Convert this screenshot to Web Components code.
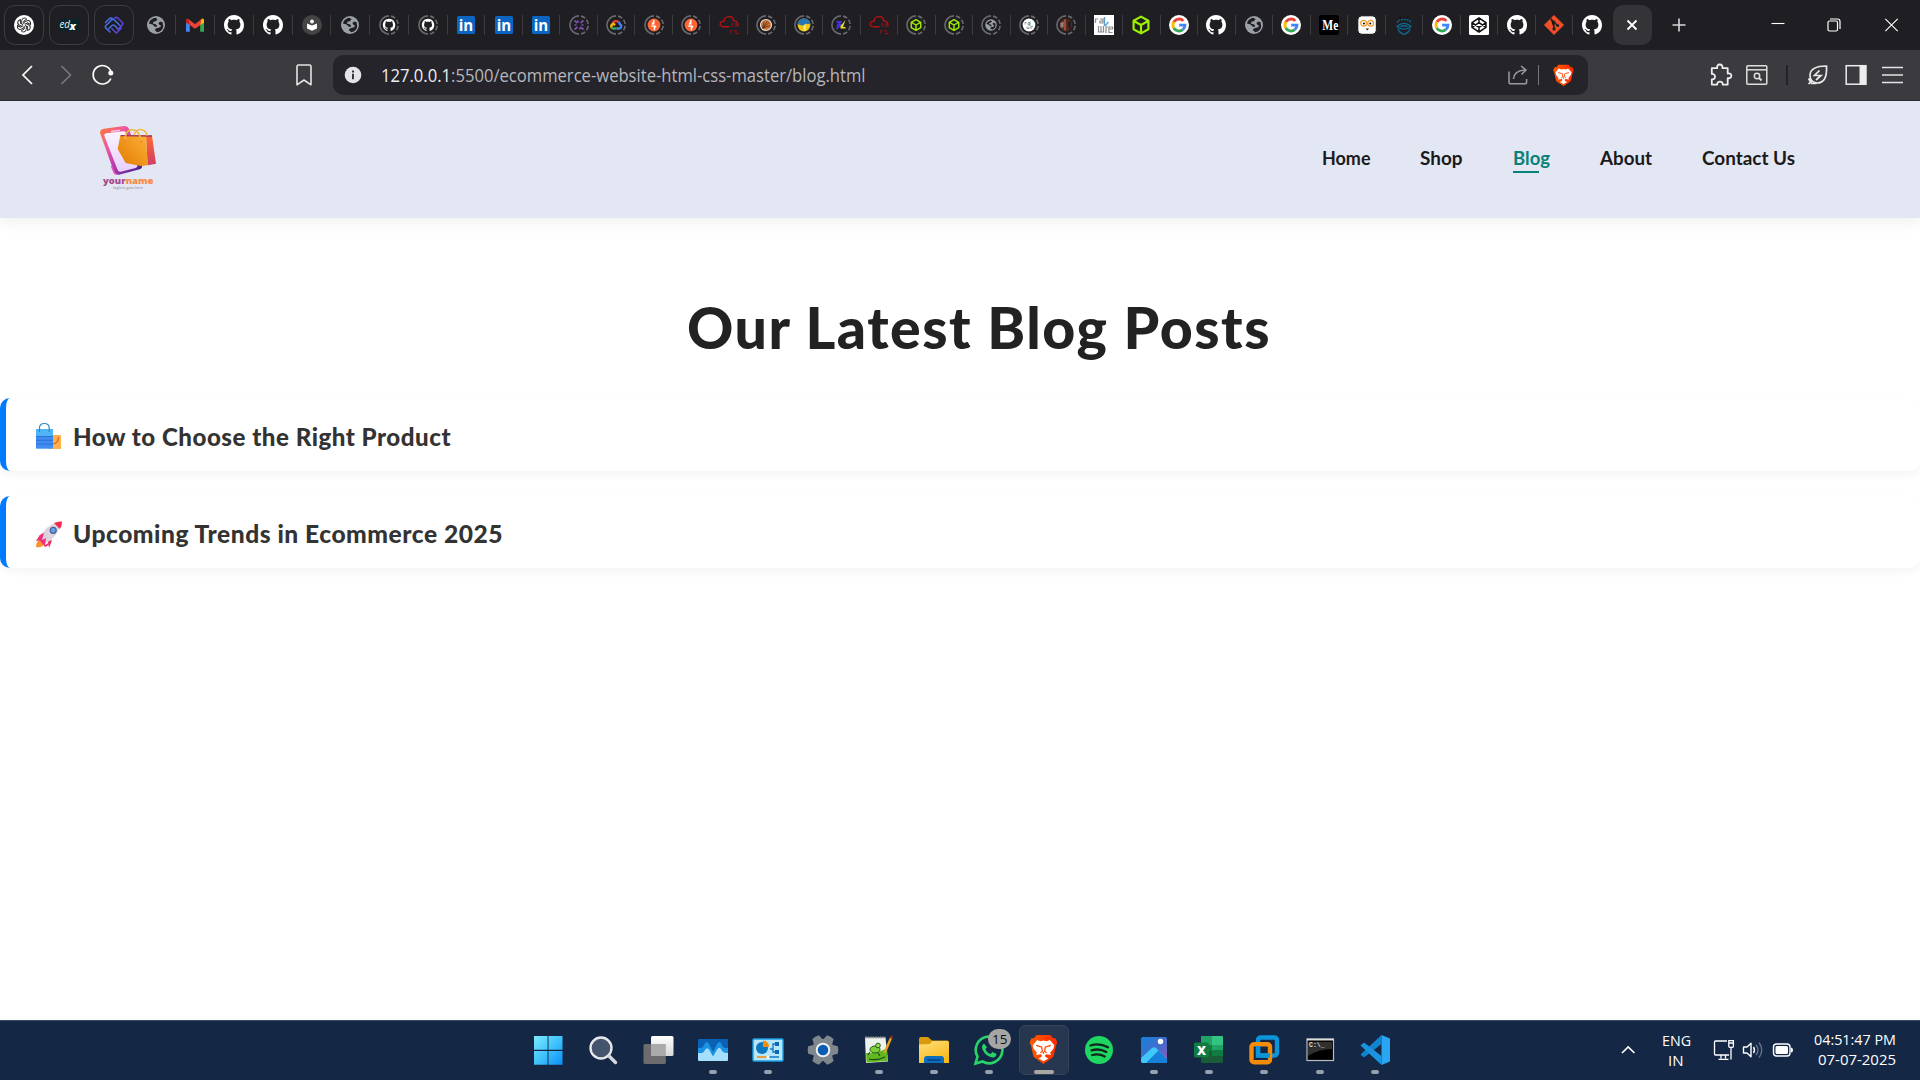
<!DOCTYPE html>
<html lang="en">
<head>
<meta charset="utf-8">
<title>Blog</title>
<style>
html,body{margin:0;height:100%;overflow:hidden;background:#fff}
</style>
</head>
<body>
<desktop-screen></desktop-screen>
<script>
const GH='<path fill="#fff" d="M8 0C3.58 0 0 3.58 0 8c0 3.54 2.29 6.53 5.47 7.59.4.07.55-.17.55-.38 0-.19-.01-.82-.01-1.49-2.01.37-2.53-.49-2.69-.94-.09-.23-.48-.94-.82-1.13-.28-.15-.68-.52-.01-.53.63-.01 1.08.58 1.23.82.72 1.21 1.87.87 2.33.66.07-.52.28-.87.51-1.07-1.78-.2-3.64-.89-3.64-3.95 0-.87.31-1.59.82-2.15-.08-.2-.36-1.02.08-2.12 0 0 .67-.21 2.2.82.64-.18 1.32-.27 2-.27s1.36.09 2 .27c1.53-1.04 2.2-.82 2.2-.82.44 1.1.16 1.92.08 2.12.51.56.82 1.27.82 2.15 0 3.07-1.87 3.75-3.65 3.95.29.25.54.73.54 1.48 0 1.07-.01 1.93-.01 2.2 0 .21.15.46.55.38A8.01 8.01 0 0 0 16 8c0-4.42-3.58-8-8-8z"/>';
const RING='<path d="M10 .9A9.1 9.1 0 0 0 10 19.1" fill="none" stroke="#6a6a6d" stroke-width="1.6"/><path d="M12 1.1A9.1 9.1 0 0 1 12 18.9" fill="none" stroke="#6a6a6d" stroke-width="1.6" stroke-dasharray="4.6 2"/>';
const ringed=s=>RING+`<g transform="translate(3.6 3.6) scale(.64)">${s}</g>`;
const GLOBE='<circle cx="10" cy="10" r="9" fill="#9aa0a6"/><path d="M9.5 2.8C6.5 3.2 3.6 5.4 3 8.4l3.6 1.2 2.2 2.2h2l.2-1.6-2-1.2-2-.2.4-2 2.4-.6 1.8-2zM16.6 7.2l-2.6-.6-1.6 1.6 1.2 1.8 1.8 1-2 1.6-3.6.8-1 1.8 2.6 2c3-.4 5.6-3 5.8-6z" fill="#1f1e23"/>';
const HEX='<path d="M10 1.6 17.4 5.8v8.4L10 18.4 2.6 14.2V5.8zM2.8 6 10 10l7.2-4M10 10v8" fill="none" stroke="#9fef00" stroke-width="2.2" stroke-linejoin="round"/>';
const BURP='<circle cx="10" cy="10" r="10" fill="#ff6633"/><path d="M11 1 6 9h4l-1.6 4.4L14 11h-3.600zM9.2 19l4.8-7.4-4 .4z" fill="#fff"/><path d="M9 2v6l-3 4h5v6" stroke="#fff" stroke-width="1.4" fill="none"/>';
const RAR='<rect width="20" height="20" fill="#fff"/><g fill="none" stroke="#8e8e90" stroke-width="1.2"><path d="M1.5 8V4h2.8M6 4h3v4H6V6h3M4.5 11v6h5v-6M7 11v6M12 18v-6h2M15 14h3.6v-2H15v5.500h3.600"/></g><path d="M10.500 2v9M14.500 7 11 11" stroke="#5a9fd4" stroke-width="1.400"/>';
const GOOGLE='<circle cx="10" cy="10" r="10" fill="#fff"/><g fill="none" stroke-width="2.8"><path d="M4.8 7A6 6 0 0 1 14.4 5.900" stroke="#ea4335"/><path d="M4.8 7a6 6 0 0 0 0 6" stroke="#fbbc05"/><path d="M4.800 13a6 6 0 0 0 9 1.700" stroke="#34a853"/><path d="M13.800 14.700A6 6 0 0 0 16 10.100h-5.800" stroke="#4285f4"/></g>';
const CLOUD='<path d="M5.5 11.800C-.5 12 0 5.800 5 6.200 5.300.200 14.200 0 14.500 5.800c3.200-.4 5 2.600 4 5.200M5 11.800h5.500" fill="none" stroke="#b01218" stroke-width="1.400"/><path d="M12 9h2.500m1 0h4M12.500 11.200h2m1.500 0h3.500M11 15.800h2.500m1.500 0h3M11 17.500h1.500m3.500 1h3.500" stroke="#861418" stroke-width="1.300"/>';
const LION='<path d="M16 1h7l3 3.500h2.500l1.800 4.500-1.300 2.500-2.800 12L16 31 5.800 23.500 3 11.500 1.700 9l1.800-4.500H6L9 1z" fill="url(#bg)"/><defs><linearGradient id="bg"><stop stop-color="#ff5a00"/><stop offset="1" stop-color="#ff2a00"/></linearGradient></defs><path d="M16 6.800l3.200.7 3.300-1.300 4.700 5.300-1 3.700-3.400 4.200.9 2.200-5.200-.6-.9 1.100.5 1.600 2.900 1.500L16 28l-5-2.800 2.900-1.500.5-1.600-.9-1.100-5.200.6.900-2.200-3.400-4.200-1-3.700 4.700-5.300 3.300 1.300z" fill="#fff"/><path d="M8.500 11.800l4.800 1.500M23.500 11.800l-4.800 1.500M14 12.800l.9 5.200-2.200 1.400M18 12.800l-.9 5.200 2.200 1.400M16 18.500v2" stroke="#ff4500" stroke-width="1.300" fill="none"/>';
const ICONS={
 openai:[20,'<circle cx="10" cy="10" r="10" fill="#fff"/><g fill="none" stroke="#222" stroke-width=".95">'+[0,60,120,180,240,300].map(a=>`<path transform="rotate(${a} 10 10)" d="M7.700 8.700V5.600Q7.900 3.200 10.200 3q1.600 0 2.600 1.200L9.800 6v3"/>`).join('')+'</g>'],
 edx:[20,'<rect x="0" y="4" width="20" height="12" fill="#0b2429"/><text x=".5" y="13" font-family="Open Sans,sans-serif" font-style="italic" font-size="10" textLength="10.500" lengthAdjust="spacingAndGlyphs" fill="#e6f0f0">ed</text><text x="10.500" y="14.500" font-family="Open Sans,sans-serif" font-style="italic" font-weight="800" font-size="11" fill="#fff">x</text>'],
 knot:[20,'<g fill="none" stroke-width="1.500" stroke-linecap="round"><path stroke="#4272e6" d="M2 10.500 7.500 5q1.800-1.400 3 0l5 5M1.500 7.500 5 4q2-1.800 3.800 0M5 13.500l3-3q1.500-1 2.500 0l3.500 3.500M2 10.500q-1.500 1.500 0 2.600l4 3.900"/><path stroke="#5b45d6" d="M10.500 3q1.800-1.400 3.600.3l4 4q1.400 1.500 0 3L14 14.500M15.500 10l1 1.300q1 1.500-.2 3L12.500 18M7.800 13.500l4.500 4.500"/></g>'],
 globe:[20,GLOBE],
 gmail:[20,'<path d="M1 4.500V16.800h3.800V9z" fill="#4285f4"/><path d="M19 4.500v12.300h-3.800V9z" fill="#34a853"/><path d="M1 4.500v3.200L4.800 10V5.200Q2.500 2 1 4.500z" fill="#c5221f"/><path d="M19 4.500v3.200L15.200 10V5.200Q17.500 2 19 4.500z" fill="#fbbc04"/><path d="M3.500 4.200 10 9l6.500-4.800-1.300 6L10 13.800 4.800 10z" fill="#ea4335"/>'],
 gh:[16,GH],
 reader:[20,'<circle cx="10" cy="10" r="10" fill="#444"/><circle cx="10" cy="6.500" r="1.900" fill="#fff"/><path d="M5 8.500l5 2 5-2v5l-5 2.200-5-2.200z" fill="#fff"/>'],
 ghr:[20,RING+`<g transform="translate(3.800 3.800) scale(.78)">${GH}</g>`],
 linkedin:[20,'<rect x="1" y="1" width="18" height="18" rx="1.500" fill="#0a66c2"/><text x="2.700" y="15.800" font-family="Open Sans,sans-serif" font-weight="700" font-size="16" textLength="14.500" lengthAdjust="spacingAndGlyphs" fill="#fff">in</text>'],
 purple:[20,RING+'<path d="M5.500 5.500l3 2.500M14.500 5.500l-3 2.500M5.500 14.500l3-2.500M14.500 14.500l-3-2.500M5.500 10h2M12.500 10h2M9 5.500v2M11 12.500v2" stroke="#7f4fb0" stroke-width="1.700" fill="none"/>'],
 gcloud:[20,RING+'<g fill="none" stroke-width="2.300"><path d="M6.500 8.500Q9 4.500 12.500 7" stroke="#ea4335"/><path d="M12.500 7Q14 8 14 9.500q1.500.500 1.200 2.200-.400 1.800-2.200 1.800h-2.500" stroke="#4285f4"/><path d="M10.500 13.500H7.500Q6 13.500 5.500 12.600" stroke="#34a853"/><path d="M5.500 12.600Q4.500 10 7.200 8.800l2 1.200" stroke="#fbbc05"/></g>'],
 burp:[20,ringed(BURP)],
 redcloud:[20,CLOUD],
 shell:[20,ringed('<circle cx="10" cy="10" r="9.500" fill="#e9e2da"/><circle cx="10" cy="10" r="7.800" fill="#d07535"/><path d="M5 15 15 6M5 15l2-10M5 15l7-11M5 15l11-4" stroke="#2b1c14" stroke-width="1"/>')],
 snake:[20,ringed('<circle cx="10" cy="10" r="10" fill="#f2c811"/><path d="M0 9Q1 0 10 0t10 9l-8-1-3 3z" fill="#2877b0"/><path d="M9 11l2-2 2 2v8H9z" fill="#fff" opacity=".5"/>')],
 bolt:[20,RING+'<path d="M5.500 7h4L7 10h2l-3.500 4" stroke="#4630d8" stroke-width="2" fill="none"/><path d="M14.500 5 9.500 11v2.500h5V12h-2.500z" fill="#e8df2a"/>'],
 hex:[20,HEX], hexr:[20,ringed(HEX)], glober:[20,ringed(GLOBE)],
 rarr:[20,RING+'<circle cx="10" cy="10" r="6.400" fill="#fff"/><g transform="translate(5 5) scale(.5)"><path d="M2 9V5h3M8 5h3v5H8zM6 13v4h4v-4M14 18v-5h4" fill="none" stroke="#777" stroke-width="1.500"/><path d="M12 3v9" stroke="#5a9fd4" stroke-width="2"/></g>'],
 photo:[20,RING+'<circle cx="10" cy="10" r="6.400" fill="#4b2a22"/><path d="M9 4.300v11M6 8.500Q9 5 9 13" stroke="#a64a36" stroke-width="2" fill="none"/><path d="M12 7l2.500-.5v6l-1.500 2z" fill="#1b1820"/><path d="M4.500 7.500h3v5h-3z" fill="#8d8583"/>'],
 rar:[20,RAR], google:[20,GOOGLE],
 me:[20,'<rect width="20" height="20" rx="3" fill="#000"/><text x="3.300" y="15" font-family="Liberation Serif,serif" font-weight="700" font-size="15" textLength="16" lengthAdjust="spacingAndGlyphs" fill="#fff">Me</text>'],
 owl:[20,'<rect x=".8" y=".8" width="18.500" height="18.500" rx="4" fill="#fff" stroke="#111"/><g fill="#fff" stroke="#f29a26" stroke-width="1.200"><circle cx="6.600" cy="8.200" r="2.900"/><circle cx="13.600" cy="8.200" r="2.900"/></g><circle cx="6.900" cy="8.600" r="1"/><circle cx="13.300" cy="8.600" r="1"/><path d="M8.500 13.500h3.500l-1.500 2z" fill="#222"/>'],
 bug:[20,'<g fill="none" stroke="#0a6b95" stroke-width="1.300"><path d="M3.500 8V6.200l3.500-1.500h6l3.500 1.500V8" stroke-dasharray="2 .8"/><path d="M3 11.200Q10 5.500 17 11.200 10 17 3 11.200zM3.800 13.500q1.200 4 6.200 6 5-2 6.200-6M6.500 11.500q3.500-1.500 7 0"/></g><path d="M6 1.500l1 1.800M14 1.500l-1 1.800M10 0v2" stroke="#111" />'],
 codepen:[20,'<rect width="20" height="20" rx="1.500" fill="#fff"/><path d="M10 3l7 4.600v4.800L10 17l-7-4.600V7.600zM3 7.600l7 4.800 7-4.800M3 12.400 10 7.600l7 4.800M10 3v4.600M10 12.400V17" fill="none" stroke="#111" stroke-width="1.500" stroke-linejoin="round"/>'],
 git:[20,'<path d="M10 .5 19.500 10 10 19.500.5 10z" fill="#f34f29" stroke="#f34f29" stroke-linejoin="round"/><path d="M6.500 3.500 10 7v7M10 7l3.500 3.500" stroke="#2a201f" stroke-width="1.500"/><g fill="#2a201f"><circle cx="10" cy="7" r="1.500"/><circle cx="10" cy="14" r="1.700"/><circle cx="13.600" cy="10.500" r="1.600"/></g>'],
 close:[20,'<path d="M5 5l10 10m0-10l-10 10" stroke="#fff" stroke-width="2"/>'],
 plus:[20,'<path d="M10 3.500v13M3.500 10h13" stroke="#d8d8da" stroke-width="1.600"/>'],
 min:[20,'<path d="M3.500 8.500h13" stroke="#fff" stroke-width="1.100"/>'],
 max:[20,'<g fill="none" stroke="#fff" stroke-width="1.200"><rect x="3" y="6" width="9.500" height="10" rx="1.500"/><path d="M5 4h7.500q2.500 0 2.500 2.500V14"/></g>'],
 wclose:[20,'<path d="M3.300 3.800l12.400 12.400m0-12.400L3.300 16.200" stroke="#fff" stroke-width="1.100"/>'],
 back:[24,'<path d="M16 3 7 12l9 9" fill="none" stroke="#fff" stroke-width="1.700"/>'],
 fwd:[24,'<path d="M7.500 3l9 9-9 9" fill="none" stroke="#77777b" stroke-width="1.700"/>'],
 reload:[24,'<path d="M19.800 15.500A9.200 9.200 0 1 1 20 8.500" fill="none" stroke="#fff" stroke-width="1.700"/><circle cx="19.800" cy="10" r="2.500" fill="#fff"/>'],
 mark:[24,'<path d="M5 3.500Q5 2 6.500 2h11Q19 2 19 3.500v18.300L12 17l-7 4.800z" fill="none" stroke="#e4e4e6" stroke-width="1.600" stroke-linejoin="round"/>'],
 info:[20,'<circle cx="10" cy="10" r="8.300" fill="#e4e4e8"/><path d="M10 5.400v2M10 8.800v5.400" stroke="#25242a" stroke-width="1.800"/>'],
 share:[20,'<path d="M1 6.500v10.500q0 1.800 1.800 1.800h14q1.800 0 1.800-1.800v-3M5.500 14Q5.800 6 16.500 5M13 1l5 4-4.500 4.500" fill="none" stroke="#9c9ca0" stroke-width="1.500"/>'],
 lion:[32,LION],
 puzzle:[24,'<path d="M2.800 5.200h5.400q-.6-3.700 2.600-3.700t2.600 3.700h5.300v5.300q3.600-.5 3.600 2.300t-3.600 2.400v6.400h-5q.2-3-2.700-3t-2.800 3H2.800v-5.300q3.200.2 3.200-2.600t-3.200-2.800z" fill="none" stroke="#ededf0" stroke-width="1.800" stroke-linejoin="round"/>'],
 find:[24,'<g fill="none" stroke="#dedee0" stroke-width="1.500"><rect x="1.800" y="2.800" width="20" height="18.500" rx="1"/><path d="M2 6.800h20"/><circle cx="12" cy="13" r="2.700"/><path d="M14 15l2.500 2.500" stroke-width="2"/></g>'],
 leaf:[24,'<g fill="none" stroke="#e8e8ea" stroke-width="1.700"><path d="M20.500 3Q4 3 4 12.500q0 7 7 7.500 10.500 0 9.500-17zM2.500 21l3.500-3.500M2.500 15.500l3 5h5"/><path d="M13.500 7.500 8.500 12.500h6.500l-5 4.500"/></g>'],
 side:[24,'<rect x="2.200" y="2.700" width="19.500" height="18.500" fill="none" stroke="#ededf0" stroke-width="1.500"/><path d="M15.500 2h7v20h-7z" fill="#ededf0"/>'],
 menu:[24,'<path d="M1 4.500h21M1 12h21M1 19.500h21" stroke="#e4e4e6" stroke-width="1.700"/>'],
 win:[32,'<defs><linearGradient id="w" gradientUnits="userSpaceOnUse" x1="2" y1="2" x2="30" y2="30"><stop stop-color="#7deaff"/><stop offset=".5" stop-color="#42c4fb"/><stop offset="1" stop-color="#0c8ff8"/></linearGradient></defs><path fill="url(#w)" d="M2 2h13.600v13.800H2zM16.500 2h14v13.800h-14zM2 17h13.600v13.800H2zM16.500 17h14v13.800h-14z"/>'],
 search:[32,'<circle cx="14" cy="14" r="10.500" fill="#46536c" stroke="#e6e8ec" stroke-width="2.400"/><path d="M22 22l6.500 6.500" stroke="#d6d8dd" stroke-width="3.400" stroke-linecap="round"/>'],
 task:[32,'<defs><linearGradient id="t" x2="0" y2="1"><stop stop-color="#fff"/><stop offset="1" stop-color="#d8d8d8"/></linearGradient></defs><rect x="1.500" y="10" width="22.300" height="20" rx="1.500" fill="#6c6c6e"/><rect x="9" y="2" width="22.500" height="20" rx="1.500" fill="url(#t)"/><path d="M9 10h14.800v12H10q-1 0-1-1z" fill="#aaa"/>'],
 mon:[32,'<rect x="1" y="5" width="30" height="22" rx="1" fill="#0b62b5"/><path d="M1 14h3q2 0 3.500-4 2-4 4.500 0l4 8 4-8q2.500-4 4.500 0 1.500 5 6.500 4v10H1z" fill="#1b93e4"/><path d="M1 19h4q1.500 0 3-3 2.500-4 5 1l3 5.500 3.500-6q2.500-5 5-.5 1.500 3.500 6.500 3v7q0 1-1 1H2q-1 0-1-1z" fill="#a6dffb"/>'],
 panel:[32,'<rect x="1" y="5" width="30" height="22" rx="1" fill="#b6e6fb" stroke="#19a0e2" stroke-width="1.400"/><circle cx="10" cy="14" r="6" fill="#0c78c2"/><path d="M11 6.500V13h6q0-6-6-6.500z" fill="#f58a0b"/><path d="M18 15h3v-5h3M21 15v3h3" stroke="#0c78c2" stroke-width="1.300" fill="none"/><path d="M23 8h4v4h-4zM23 16h4v4h-4z" fill="#0c66b5"/><path d="M5 23h11" stroke="#f58a0b" stroke-width="1.500"/><path d="M16 23h11" stroke="#0c78c2" stroke-width="1.500"/><circle cx="16" cy="23" r="1.500" fill="#fff"/>'],
 gear:[32,'<g fill="#7f868c">'+[0,60,120,180,240,300].map(a=>`<path transform="rotate(${a+30} 16 16)" d="M10.500 8 12.300 1.200q3.700-1 7.400 0L21.500 8z"/>`).join('')+'<circle cx="16" cy="16" r="11"/></g><circle cx="16" cy="16" r="6.300" fill="#0a5cb0" stroke="#eef1f4" stroke-width="2"/>'],
 npp:[32,'<path d="M2 3.500h20.500L25 27.500 3 29z" fill="#eef2ec"/><path d="M3 19q12 1 21-5l.7 13L3.500 28.500z" fill="#63b822"/><path d="M2 3.500h20.500" stroke="#999" stroke-width="2" stroke-dasharray="1.500 1"/><ellipse cx="12" cy="15.500" rx="5" ry="3.500" fill="#7bd03a" stroke="#245c12"/><circle cx="15" cy="11.500" r="2.300" fill="#9be25a" stroke="#245c12"/><path d="M7 18l-2 3M15 19l2 3M6 25q8 2 16-2" stroke="#184c0c" stroke-width="1.100" fill="none"/><path d="M28 4 21.500 19" stroke="#e6a31a" stroke-width="2.400"/><path d="M28.800 2 28 4.500" stroke="#93301e" stroke-width="2.500"/>'],
 folder:[32,'<defs><linearGradient id="f" x2=".6" y2="1"><stop stop-color="#ffe07a"/><stop offset="1" stop-color="#f8b91c"/></linearGradient></defs><path d="M1 5q0-2 2-2h7l4 3.500h15q2 0 2 2V15H1z" fill="#d99a0b"/><path d="M1 10.500 12 10l2-3h15q2 0 2 2v20H1z" fill="url(#f)"/><path d="M6 29v-4q0-3 3-3h14q3 0 3 3v4z" fill="#0c6cbd"/><path d="M10 26h12" stroke="#063f80" stroke-width="1.500" stroke-linecap="round"/>'],
 wa:[32,'<path d="M2.500 29.500 4.500 22.500A13.300 13.300 0 1 1 9.500 27.500z" fill="none" stroke="#28d467" stroke-width="2.600"/><path d="M11 9.500q-3 2-1.500 6 3.500 7.500 10.500 8 3-.200 3.500-3.500l-4-2-2 2q-4-1.500-5-5l1.500-1.800z" fill="#28d467"/>'],
 spotify:[32,'<circle cx="16" cy="16" r="14" fill="#1ed760"/><path d="M7.500 11.500q9-2.800 17.500 1.800M8.500 16.300q8-2.200 14.800 1.600M9.200 21q7-1.800 12.500 1.500" fill="none" stroke="#10251d" stroke-width="2.300" stroke-linecap="round"/>'],
 photos:[32,'<defs><linearGradient id="p" x2="1" y2="1"><stop stop-color="#1383dc"/><stop offset=".6" stop-color="#4d68c8"/><stop offset="1" stop-color="#a05ab4"/></linearGradient></defs><rect x="3" y="3" width="26" height="26" rx="2" fill="url(#p)"/><path d="M3 24 14 14q2-1.500 4 0l11 11v2q0 2-2 2H5q-2 0-2-2z" fill="#3fc8f8"/><path d="M20.500 16.500 29 25v2q0 2-2 2H8z" fill="#1680d8"/><circle cx="22.500" cy="7.500" r="2.700" fill="#fff"/>'],
 excel:[32,'<rect x="8" y="2" width="22" height="27" rx="1.500" fill="#1a5c37"/><path d="M8 3q0-1 1-1h10v9H8z" fill="#21a366"/><path d="M19 2h10q1 0 1 1v8H19z" fill="#33c481"/><path d="M8 11h11v6H8z" fill="#107c41"/><path d="M19 11h11v5H19z" fill="#21a366"/><path d="M19 16h11v6H19z" fill="#107c41"/><rect x="1" y="8.500" width="15" height="15" rx="1.500" fill="#107c41"/><text x="8.500" y="20.500" text-anchor="middle" font-family="Open Sans,sans-serif" font-weight="800" font-size="12.500" fill="#fff">X</text>'],
 vm:[32,'<g fill="none" stroke-width="4.400"><rect x="10" y="3.500" width="19" height="18" rx="2.500" stroke="#0d95d9"/><rect x="3.500" y="10.300" width="18.500" height="18" rx="2.500" stroke="#f68b0a"/><path d="M10 12v9.500h12" stroke="#0d95d9"/></g>'],
 cmd:[32,'<rect x="3" y="5" width="26.500" height="21.500" fill="#000" stroke="#b9bcc0" stroke-width="1.200"/><path d="M4 8h24v7Q15 15 4 22z" fill="#303030"/><path d="M3 5.600h26.500" stroke="#ddd" stroke-width="1.800"/><text x="5" y="13" font-family="Liberation Mono,monospace" font-weight="700" font-size="6.500" fill="#ddd">C:\\_</text>'],
 code:[32,'<path d="M22.500 1 31 4.500v23L22.500 31z" fill="#2aa5f2"/><path d="M22.500 1v9L5 23.500l-3.500-3z" fill="#1283cf"/><path d="M22.500 31v-9L5 8.500l-3.500 3z" fill="#1a93e0"/>'],
 chev:[20,'<path d="M4 13 10.200 7l6.200 6" fill="none" stroke="#fff" stroke-width="1.700"/>'],
 net:[22,'<g fill="none" stroke="#fff" stroke-width="1.300"><path d="M14 2H2.500Q1.500 2 1.500 3v12q0 1 1 1H16M8 16v3.500M12.500 16v3.500M5.500 20.300h10"/><path d="M15.800 1.700h4.600v5.500q0 1.300-2.300 1.300t-2.300-1.300zM15.800 4h4.600M18 8.500v12"/></g>'],
 vol:[22,'<path d="M1.500 8h3.500L9 4.300v13.400L5 14H1.500z" fill="none" stroke="#fff" stroke-width="1.400" stroke-linejoin="round"/><path d="M11.500 8q2 3 0 6" stroke="#fff" stroke-width="1.400" fill="none"/><path d="M14 5.800q4 5 0 10.400M17 3.500q5.500 7.500 0 15" stroke="#66738a" stroke-width="1.400" fill="none"/>'],
 bat:[22,'<rect x="1.500" y="5" width="16.500" height="12" rx="3" fill="none" stroke="#fff" stroke-width="1.400"/><rect x="3.500" y="7" width="12.500" height="8" rx="1.500" fill="#fff"/><path d="M19 8.500q2 0 2 2.500t-2 2.500z" fill="#fff"/>'],
 bags:[28,'<path d="M13.500 13h12.500v14H13.500z" fill="#ffb04a"/><path d="M23.500 15q0 6-5.500 7" stroke="#d9622b" stroke-width="1.200" fill="none"/><path d="M1 7h17v19.500H1z" fill="#4fb4f8"/><path d="M1 15h17v10.500q0 1-1 1H2q-1 0-1-1z" fill="#3f8df2"/><path d="M1 14.500h17M1 18.300h17M1 22h17" stroke="#2f6fd0" stroke-width="1"/><path d="M4.500 10V6q0-4.500 4.800-4.500T14.200 6v4" fill="none" stroke="#2f87c9" stroke-width="1.200"/>'],
 rocket:[28,'<path d="M5 15l-4 6 6-1zM13 21l1 7 3-8z" fill="#e8245a"/><path d="M1 27q0-6 4-7l4 4q-2 4-8 3z" fill="#f8932a"/><path d="M5 18Q11 5 21 3l3.500 4Q22 17 10 24z" fill="#dcd3df"/><path d="M19 3q4-2 8-1.500Q27 6 24.800 9z" fill="#f12a4e"/><path d="M3 19q1-5 6-6l-2 7 4-2-1 7 5-3q-1 4-5 5l-3-4z" fill="#f0307a"/><circle cx="18.200" cy="10.300" r="3" fill="#5aa5ee" stroke="#4a5f96" stroke-width="1.200"/>'],
};

class UiIcon extends HTMLElement{
  connectedCallback(){
    const [v,b]=ICONS[this.getAttribute('name')],s=this.getAttribute('size')||v;
    this.attachShadow({mode:'open'}).innerHTML=`<style>:host{display:block;flex:none;width:${s}px;height:${s}px}svg{display:block}</style><svg width="${s}" height="${s}" viewBox="0 0 ${v} ${v}">${b}</svg>`;
  }
}
customElements.define('ui-icon',UiIcon);

/* A single line of text whose glyph run is scaled to a given width. */
class FitText extends HTMLElement{
  connectedCallback(){
    const w=+this.getAttribute('w');
    this.attachShadow({mode:'open'}).innerHTML=`<style>:host{display:block;flex:none;width:${w}px;white-space:nowrap}span{display:inline-block;transform-origin:0 50%}</style><span><slot></slot></span>`;
    const s=this.shadowRoot.querySelector('span');
    s.style.transform=`scaleX(${w/s.getBoundingClientRect().width})`;
  }
}
customElements.define('fit-text',FitText);

class BrowserTabs extends HTMLElement{
  connectedCallback(){
    const a='globe gmail gh gh reader globe ghr ghr'.split(' ');
    const b='linkedin linkedin linkedin purple gcloud burp burp redcloud shell snake bolt redcloud hexr hexr glober rarr photo rar hex google gh globe google me owl bug google codepen gh git gh'.split(' ');
    const cell=(n,c)=>`<div class="tab ${c}"><ui-icon name="${n}" size="20"></ui-icon></div>`;
    this.attachShadow({mode:'open'}).innerHTML=`<style>
    :host{display:flex;height:50px;background:#1f1e23;align-items:center;box-sizing:border-box}
    .pins{display:flex;gap:5px;padding-left:4px;width:133.500px;flex:none}
    .pin{box-sizing:border-box;width:40px;height:40px;border:1px solid #3d3c41;border-radius:11px;display:grid;place-items:center}
    .tab{flex:none;width:38.800px;height:20px;display:grid;place-items:center;box-sizing:border-box;border-right:1px solid #3d3c41}
    .n{width:37.530px}.tab:last-of-type{border-color:transparent}
    .active{width:39px;height:40px;border-radius:10px;background:#343338;display:grid;place-items:center;margin:0 17px 0 1.900px}
    .ctl{display:flex;margin-left:auto;gap:37px;padding-right:18.500px}
    </style><div class="pins">${['openai','edx','knot'].map(n=>`<div class="pin"><ui-icon name="${n}" size="20"></ui-icon></div>`).join('')}</div>
    ${a.map(n=>cell(n,'')).join('')}${b.map(n=>cell(n,'n')).join('')}
    <section class="active"><ui-icon name="close" size="18"></ui-icon></section><ui-icon name="plus"></ui-icon>
    <section class="ctl"><ui-icon name="min"></ui-icon><ui-icon name="max"></ui-icon><ui-icon name="wclose"></ui-icon></section>`;
  }
}
customElements.define('browser-tabs',BrowserTabs);

class BrowserToolbar extends HTMLElement{
  connectedCallback(){
    this.attachShadow({mode:'open'}).innerHTML=`<style>
    :host{display:flex;height:51px;box-sizing:border-box;background:#3b3a3f;border-bottom:1px solid #2b2a30;align-items:center;font:18px/24px "Open Sans",sans-serif;color:#b6b6bc}
    .left{display:flex;gap:13.500px;padding-left:16px;flex:none}
    .mark{margin-left:176.500px;margin-right:17.500px}
    .url{display:flex;align-items:center;width:1255px;height:40px;border-radius:11px;background:#25242a;box-sizing:border-box;padding:0 13px 0 10px;flex:none}
    b{font-weight:400;color:#eeeef2}
    .info{margin-right:18px}
    .share{margin-left:auto}
    i{display:block;width:1px;height:20px;background:#77777b;margin:0 13px 0 10px}
    .right{display:flex;align-items:center;margin-left:auto;padding-right:15px}
    .right i{width:2px;background:#232227;margin:0 18px 0 17px}
    </style>
    <div class="left"><ui-icon name="back"></ui-icon><ui-icon name="fwd"></ui-icon><ui-icon name="reload"></ui-icon></div>
    <ui-icon class="mark" name="mark"></ui-icon>
    <div class="url"><ui-icon class="info" name="info"></ui-icon><fit-text w="484.500"><b>127.0.0.1</b>:5500/ecommerce-website-html-css-master/blog.html</fit-text>
      <ui-icon class="share" name="share"></ui-icon><i></i><ui-icon name="lion" size="23"></ui-icon></div>
    <div class="right"><ui-icon name="puzzle"></ui-icon><ui-icon name="find" style="margin-left:12px"></ui-icon><i></i><ui-icon name="leaf"></ui-icon><ui-icon name="side" style="margin-left:14px"></ui-icon><ui-icon name="menu" style="margin-left:13px"></ui-icon></div>`;
  }
}
customElements.define('browser-toolbar',BrowserToolbar);

class BrandLogo extends HTMLElement{
  connectedCallback(){
    this.attachShadow({mode:'open'}).innerHTML=`<style>:host{display:block;width:60px;height:68px}svg{display:block}</style>
    <svg width="60" height="68" viewBox="114 72 180 204"><defs>
    <linearGradient id="a" x2="1" y2="1"><stop stop-color="#ff7a2a"/><stop offset=".3" stop-color="#f05a9a"/><stop offset=".6" stop-color="#b13ab0"/><stop offset="1" stop-color="#2d1a80"/></linearGradient>
    <linearGradient id="e" x2="0" y2="1"><stop stop-color="#f9f4ff"/><stop offset="1" stop-color="#e8cfff"/></linearGradient>
    <linearGradient id="b" x1="1" x2="0" y2="1"><stop stop-color="#ffb13a"/><stop offset="1" stop-color="#e07a00"/></linearGradient>
    <linearGradient id="c" x2="0" y2="1"><stop stop-color="#ff6a2a"/><stop offset="1" stop-color="#cf3d66"/></linearGradient></defs>
    <path d="M120 98q0-10 12-12l60-8q12 0 15 10l39 108q2 9-7 12l-62 16q-10 2-15-8z" fill="url(#a)"/>
    <path d="M133 108q-2-6 5-8l52-6q6-1 8 5l34 97q2 6-5 8l-45 11q-7 1-9-5z" fill="url(#e)"/>
    <path d="M152 92l28-3v4l-26 3z" fill="#f6d9f2"/>
    <path d="M172 222q-8 2-12-10l-6-14" fill="none" stroke="#f052c0" stroke-width="4"/>
    <path d="M258 107h18l12 84-25 5z" fill="url(#c)"/><path d="M181 106l77-1 5 91-20 2-46-9-24-42z" fill="url(#b)"/>
    <path d="M182 107l94 1" stroke="#9b3560" stroke-width="4"/>
    <path d="M195 122q0-33 22-33t27 35M222 105q8-20 23-16 13 2 17 18" fill="none" stroke="#f4b63e" stroke-width="4.500"/>
    <circle cx="195" cy="122" r="4" fill="#f58a30"/><circle cx="244" cy="125" r="4" fill="#f58a30"/>
    <text x="129" y="251" font-family="Open Sans,sans-serif" font-weight="800" font-size="25" textLength="151" lengthAdjust="spacingAndGlyphs"><tspan fill="#a8488a">your</tspan><tspan fill="#f98a45">name</tspan></text>
    <text x="159" y="266" font-family="Open Sans,sans-serif" font-size="10" fill="#aaabb8" textLength="90">tagline goes here</text></svg>`;
  }
}
customElements.define('brand-logo',BrandLogo);

class SiteHeader extends HTMLElement{
  connectedCallback(){
    this.attachShadow({mode:'open'}).innerHTML=`<style>
    :host{display:flex;justify-content:space-between;align-items:flex-start;height:117px;box-sizing:border-box;background:#e3e6f3;box-shadow:0 5px 15px rgba(0,0,0,.06);padding:22.500px 125.500px 0 98px;font:700 18.500px/24px Lato,sans-serif;color:#1a1a1a}
    nav{display:flex;gap:50px;padding-top:22px}
    .on{color:#088178}.on::after{content:"";display:block;width:26px;height:2px;margin-top:1px;background:#088178}
    </style><brand-logo></brand-logo><nav><fit-text w="48.500">Home</fit-text><fit-text w="42.500">Shop</fit-text><fit-text class="on" w="37">Blog</fit-text><fit-text w="52">About</fit-text><fit-text w="93">Contact Us</fit-text></nav>`;
  }
}
customElements.define('site-header',SiteHeader);

class BlogPost extends HTMLElement{
  connectedCallback(){
    this.attachShadow({mode:'open'}).innerHTML=`<style>
    :host{display:flex;align-items:center;height:72.500px;box-sizing:border-box;border-left:6px solid #007bff;border-radius:10px;background:#fff;box-shadow:0 4px 8px rgba(0,0,0,.045);padding:5px 0 0 29px;margin-bottom:25px;font:900 24px/32px Lato,sans-serif;letter-spacing:.5px;color:#333}
    ui-icon{margin:-1px 10px 0 0}
    </style><ui-icon name="${this.getAttribute('icon')}"></ui-icon><fit-text w="${this.getAttribute('w')}">${this.textContent}</fit-text>`;
  }
}
customElements.define('blog-post',BlogPost);

class BlogPage extends HTMLElement{
  connectedCallback(){
    this.attachShadow({mode:'open'}).innerHTML=`<style>
    :host{display:block;flex:1;background:#fff;overflow:hidden}
    h1{margin:69px 0 31px 687px;font:900 57px/80px Lato,sans-serif;letter-spacing:1.500px;color:#222}
    </style><site-header></site-header><h1><fit-text w="584">Our Latest Blog Posts</fit-text></h1>
    <blog-post icon="bags" w="378">How to Choose the Right Product</blog-post>
    <blog-post icon="rocket" w="430">Upcoming Trends in Ecommerce 2025</blog-post>`;
  }
}
customElements.define('blog-page',BlogPage);

class DesktopTaskbar extends HTMLElement{
  connectedCallback(){
    const apps='win search task mon. panel. gear npp. folder. wa. lion* spotify photos. excel. vm. cmd. code.'.split(' ');
    this.attachShadow({mode:'open'}).innerHTML=`<style>
    :host{display:flex;height:60px;box-sizing:border-box;background:#142745;border-top:1px solid #3a4a62;align-items:center;font:15px/20px "Open Sans",sans-serif;color:#fff}
    .apps{display:flex;padding-left:520.300px}
    .app{width:55.130px;height:59px;display:grid;place-items:center;position:relative;flex:none}
    .app::before{content:"";position:absolute;z-index:0;inset:4px 2.500px 5px;border-radius:6px}
    .act::before{background:#26374f;border:1px solid #34435a}
    ui-icon{position:relative;margin-bottom:2px}
    .run::after{content:"";position:absolute;left:23.500px;bottom:6px;width:8px;height:4px;border-radius:2px;background:#97a0ae}
    .act::after{left:17.500px;width:20px;background:#aca8a3}
    .badge{position:absolute;left:27px;top:8px;width:23px;height:20px;border-radius:10px;background:#a6a5a3;color:#111;font-size:13.500px;text-align:center}
    .tray{margin-left:auto;display:flex;align-items:center;padding-right:24.500px}
    .lang,.clock{display:flex;flex-direction:column;padding-bottom:2px}
    .lang{align-items:center;margin:0 22px 0 24px}
    .clock{align-items:flex-end;margin-left:20px;padding-bottom:4px}
    </style><div class="apps">${apps.map(a=>{const n=a.replace(/[.*]/,'');return `<div class="app ${/[.*]/.test(a)?'run':''} ${a.includes('*')?'act':''}"><ui-icon name="${n}" size="${n=='lion'?31:32}"></ui-icon>${n=='wa'?'<span class="badge">15</span>':''}</div>`}).join('')}</div>
    <div class="tray"><ui-icon name="chev"></ui-icon><div class="lang"><fit-text w="29">ENG</fit-text><fit-text w="15.500">IN</fit-text></div>
    <ui-icon name="net"></ui-icon><ui-icon name="vol" style="margin-left:7px"></ui-icon><ui-icon name="bat" style="margin-left:8px"></ui-icon>
    <div class="clock"><fit-text w="82">04:51:47 PM</fit-text><fit-text w="78">07-07-2025</fit-text></div></div>`;
  }
}
customElements.define('desktop-taskbar',DesktopTaskbar);

class DesktopScreen extends HTMLElement{
  connectedCallback(){
    this.attachShadow({mode:'open'}).innerHTML=`<style>:host{display:flex;flex-direction:column;width:1920px;height:1080px;overflow:hidden}browser-tabs,browser-toolbar,desktop-taskbar{flex:none}</style>
    <browser-tabs></browser-tabs><browser-toolbar></browser-toolbar><blog-page></blog-page><desktop-taskbar></desktop-taskbar>`;
  }
}
customElements.define('desktop-screen',DesktopScreen);
</script>
</body>
</html>
